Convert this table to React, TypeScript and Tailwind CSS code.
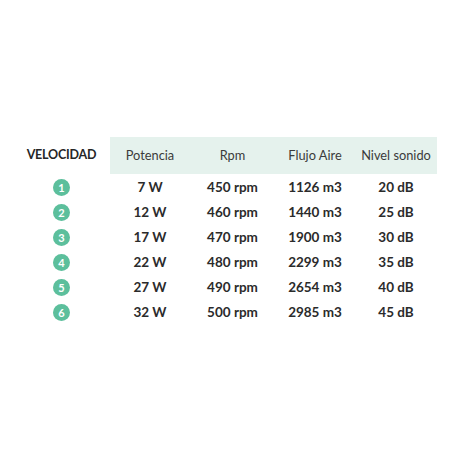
const rows = [
  { n: 1, w: '7 W', rpm: '450 rpm', flujo: '1126 m3', db: '20 dB' },
  { n: 2, w: '12 W', rpm: '460 rpm', flujo: '1440 m3', db: '25 dB' },
  { n: 3, w: '17 W', rpm: '470 rpm', flujo: '1900 m3', db: '30 dB' },
  { n: 4, w: '22 W', rpm: '480 rpm', flujo: '2299 m3', db: '35 dB' },
  { n: 5, w: '27 W', rpm: '490 rpm', flujo: '2654 m3', db: '40 dB' },
  { n: 6, w: '32 W', rpm: '500 rpm', flujo: '2985 m3', db: '45 dB' },
];

const cols = 'grid grid-cols-[97px_80px_85px_80px_82px]';

export default function App() {
  return (
    <div className="w-[452px] h-[452px] bg-white pt-[137px] pl-[13px] font-['Lato',sans-serif]">
      {/* Cabecera */}
      <div className={`${cols} h-[37px] items-center text-[12.5px]`}>
        <div className="text-center font-bold text-[#262626] tracking-[-0.2px]">VELOCIDAD</div>
        <div className="col-span-4 grid grid-cols-[80px_85px_80px_82px] h-full items-center bg-[#e5f2ed] text-[#3b3b3b] text-[12.8px]">
          <div className="text-center">Potencia</div>
          <div className="text-center">Rpm</div>
          <div className="text-center">Flujo Aire</div>
          <div className="text-center">Nivel sonido</div>
        </div>
      </div>

      {/* Filas */}
      {rows.map((r) => (
        <div key={r.n} className={`${cols} h-[25px] pt-px items-center text-[13.5px] font-bold text-[#2b2b2b]`}>
          <div className="flex justify-center">
            <span className="w-[17px] h-[17px] rounded-full bg-[#5cbf9c] text-white text-[11px] leading-none flex items-center justify-center">
              {r.n}
            </span>
          </div>
          <div className="text-center">{r.w}</div>
          <div className="text-center">{r.rpm}</div>
          <div className="text-center">{r.flujo}</div>
          <div className="text-center">{r.db}</div>
        </div>
      ))}
    </div>
  );
}
